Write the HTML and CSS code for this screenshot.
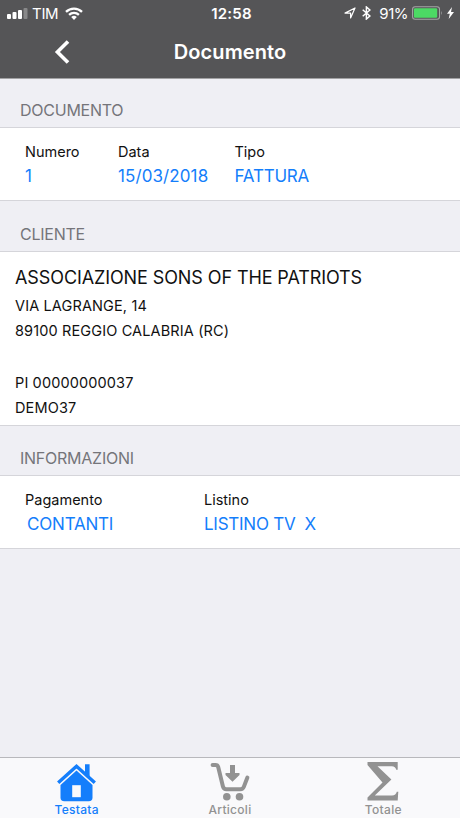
FILE: index.html
```html
<!DOCTYPE html>
<html lang="it">
<head>
    <meta charset="UTF-8">
    <meta name="viewport" content="width=device-width, initial-scale=1.0">
    <title>Documento</title>
    <link rel="stylesheet" href="styles.css">
</head>
<body>

<header class="header">
    <div class="status">
        <div class="status-left">
            <svg class="signal" width="21" height="11" viewBox="0 0 21 11" fill="#fff">
                <rect x="0" y="6" width="4" height="5" rx="1"/>
                <rect x="5.5" y="4" width="4" height="7" rx="1"/>
                <rect x="11" y="2" width="4" height="9" rx="1"/>
                <rect x="16.5" y="0" width="4" height="11" rx="1" opacity=".3"/>
            </svg>
            <span class="operatore">TIM</span>
            <svg class="wifi" width="18" height="13" viewBox="0 0 18 13" fill="none" stroke="#fff" stroke-width="2.3">
                <path d="M1 4.8a11.5 11.5 0 0 1 16 0M4.1 7.9a7 7 0 0 1 9.8 0"/>
                <path d="M6.2 10.1a4 4 0 0 1 5.6 0L9 12.9z" fill="#fff" stroke="none"/>
            </svg>
        </div>
        <span class="ora">12:58</span>
        <div class="status-right">
            <svg class="gps" width="12" height="12" viewBox="0 0 12 12" fill="none" stroke="#fff" stroke-width="1.2" stroke-linejoin="round">
                <path d="M1 6.1L11 1 6.6 11V6.1z"/>
            </svg>
            <svg class="bluetooth" width="9" height="14" viewBox="0 0 9 14" fill="none" stroke="#fff" stroke-width="1.5">
                <path d="M.7 3.8l7.2 6.2-3.5 3V1l3.5 3-7.2 6.2"/>
            </svg>
            <span class="percentuale">91%</span>
            <svg class="batteria" width="31" height="14" viewBox="0 0 32 14">
                <rect x=".6" y=".6" width="27.8" height="12.8" rx="2.6" fill="none" stroke="#a5a5a6" stroke-width="1.1"/>
                <rect x="2" y="2" width="24" height="10" rx="1.2" fill="#4cd964"/>
                <path d="M30 4.8q1.6 2.2 0 4.4z" fill="#a5a5a6"/>
            </svg>
            <svg class="fulmine" width="7" height="12" viewBox="0 0 7 12" fill="#fff">
                <path d="M5 0L0 6.8h2.8L1.7 12 7 4.9H4z"/>
            </svg>
        </div>
    </div>
    <div class="navbar">
        <svg class="indietro" width="16" height="24" viewBox="0 0 16 24" fill="none" stroke="#fff" stroke-width="3.6">
            <path d="M14 1.4L3.4 12 14 22.6"/>
        </svg>
        <h1>Documento</h1>
    </div>
</header>

<main class="contenuto">
    <h2>DOCUMENTO</h2>
    <div class="riga documento">
        <div class="campo">
            <label>Numero</label>
            <span class="valore">1</span>
        </div>
        <div class="campo">
            <label>Data</label>
            <span class="valore data">15/03/2018</span>
        </div>
        <div class="campo">
            <label>Tipo</label>
            <span class="valore">FATTURA</span>
        </div>
    </div>

    <h2 class="h2-cliente">CLIENTE</h2>
    <div class="cliente">
        <p class="nome">ASSOCIAZIONE SONS OF THE PATRIOTS</p>
        <p>VIA LAGRANGE, 14</p>
        <p>89100 REGGIO CALABRIA (RC)</p>
        <p>&nbsp;</p>
        <p>PI 00000000037</p>
        <p>DEMO37</p>
    </div>

    <h2 class="h2-info">INFORMAZIONI</h2>
    <div class="riga informazioni">
        <div class="campo">
            <label>Pagamento</label>
            <span class="valore contanti">CONTANTI</span>
        </div>
        <div class="campo">
            <label>Listino</label>
            <span class="valore listino">LISTINO TV&nbsp; X</span>
        </div>
    </div>
</main>

<nav class="tabbar">
    <a class="tab attivo">
        <svg width="40" height="40" viewBox="0 0 40 40">
            <path d="M1.2 20.800L19.500 4.200 37.800 20.800" fill="none" stroke="currentColor" stroke-width="3.4"/>
            <path d="M28 2.300h4.600v13l-4.600-4z" fill="currentColor"/>
            <path d="M19.500 8.600L35.500 23v12.500q0 3.800-3.800 3.800H7.300q-3.800 0-3.800-3.800V23z" fill="currentColor"/>
            <rect x="15.200" y="23.200" width="8.600" height="12" fill="#f9f9fb"/>
        </svg>
        <span>Testata</span>
    </a>
    <a class="tab">
        <svg width="40" height="40" viewBox="0 0 40 40">
            <path d="M2.600 3h3q2 0 2.600 2L13 24.700q.8 2.600 3.400 2.600h14q2.500 0 3.400-2.400l3.600-9.400" fill="none" stroke="currentColor" stroke-width="4" stroke-linecap="round" stroke-linejoin="round"/>
            <path d="M20 3h5v8h4.500v2L22.500 19.800l-7-6.800v-2H20z" fill="currentColor"/>
            <circle cx="16.800" cy="34.700" r="3.800" fill="currentColor"/>
            <circle cx="29.500" cy="34.700" r="3.800" fill="currentColor"/>
        </svg>
        <span>Articoli</span>
    </a>
    <a class="tab">
        <svg width="40" height="40" viewBox="0 0 40 40" fill="currentColor">
            <path d="M4.500 0h30.200v7.800h-1.500q-.7-3.500-4.400-3.500H14.500L28.400 17.500 11.800 33.500H29q4 0 4.800-3.700h1.500L34.700 38.500H4.500v-3L19.500 20.500 4.500 3z"/>
        </svg>
        <span>Totale</span>
    </a>
</nav>

</body>
</html>
```

FILE: styles.css
```css
* {
    box-sizing: border-box;
}
body {
    margin: 0;
    height: 818px;
    display: flex;
    flex-direction: column;
    background-color: #efeff4;
    color: #111;
    font-family: Inter, sans-serif;
    overflow: hidden;
}
svg {
    display: block;
    flex-shrink: 0;
}

/* header */
.header {
    height: 79px;
    background-color: #555557;
    border-bottom: 1px solid #a2a2a4;
    color: white;
}
.status {
    height: 26px;
    display: grid;
    grid-template-columns: 1fr auto 1fr;
    align-items: center;
    padding: 0 6px 0 7px;
    font-size: 15px;
}
.status-left,
.status-right {
    display: flex;
    align-items: center;
}
.status-right {
    justify-content: flex-end;
}
.operatore {
    margin: 0 7px 0 4px;
    letter-spacing: -0.3px;
}
.ora {
    padding-left: 2px;
    font-weight: 600;
    letter-spacing: 0.2px;
}
.bluetooth {
    margin: 0 8px 0 6px;
}
.percentuale {
    margin-right: 4px;
    letter-spacing: -0.5px;
}
.fulmine {
    margin-left: 4px;
}
.navbar {
    height: 52px;
    display: grid;
    grid-template-columns: 1fr auto 1fr;
    align-items: center;
}
.indietro {
    margin-left: 54px;
}
h1 {
    margin: 0;
    font-size: 20px;
    font-weight: 600;
    letter-spacing: 0.1px;
}

/* contenuto */
.contenuto {
    flex: 1;
}
h2 {
    margin: 0;
    height: 49px;
    padding: 13px 20px 0;
    border-bottom: 1px solid #d5d5da;
    color: #75757a;
    font-size: 16px;
    line-height: 36px;
    font-weight: 400;
    letter-spacing: -0.25px;
}
.h2-cliente {
    height: 51px;
    padding-top: 15px;
}
.h2-info {
    height: 50px;
    padding-top: 14px;
}
.riga {
    height: 73px;
    display: grid;
    padding: 14px 25px 0;
    background-color: white;
    border-bottom: 1px solid #d5d5da;
}
.documento {
    grid-template-columns: 93px 116.5px 1fr;
}
.informazioni {
    grid-template-columns: 179px 1fr;
}
.campo {
    display: flex;
    flex-direction: column;
}
label {
    font-size: 14.5px;
    line-height: 20px;
}
.valore {
    color: #147efb;
    font-size: 17px;
    line-height: 28px;
    letter-spacing: -0.2px;
}
.data {
    letter-spacing: 0.1px;
}
.contanti {
    margin-left: 2px;
}
.listino {
    letter-spacing: -0.25px;
}
.cliente {
    height: 174px;
    padding: 11px 15px 0;
    background-color: white;
    border-bottom: 1px solid #d5d5da;
}
.cliente p {
    margin: 0;
    font-size: 14.5px;
    line-height: 25.7px;
    letter-spacing: 0.13px;
}
.cliente .nome {
    font-size: 18px;
    line-height: 29.5px;
    letter-spacing: -0.1px;
}

/* tabbar */
.tabbar {
    height: 61px;
    display: grid;
    grid-template-columns: repeat(3, 1fr);
    background-color: #f9f9fb;
    border-top: 1px solid #b8b8bc;
}
.tab {
    display: flex;
    flex-direction: column;
    align-items: center;
    padding-top: 4px;
    color: #929292;
    font-size: 12px;
    line-height: 15px;
    font-weight: 500;
    letter-spacing: 0.3px;
}
.attivo {
    color: #147efb;
}
```
